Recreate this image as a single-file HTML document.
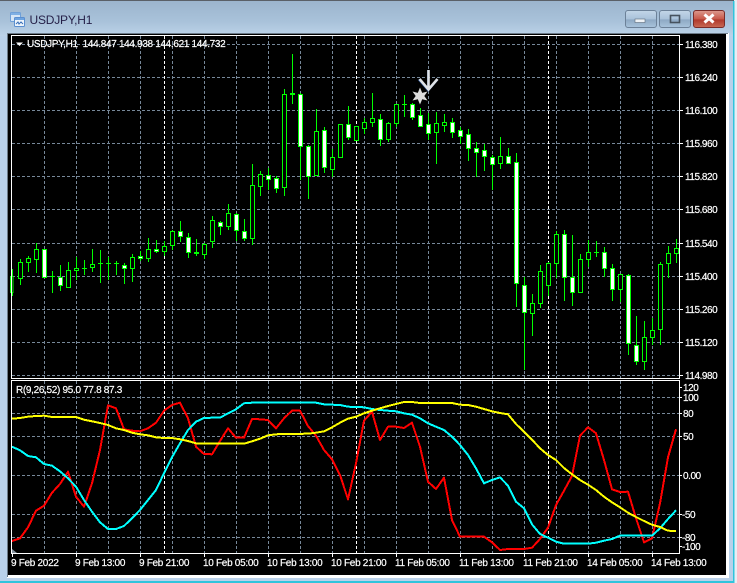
<!DOCTYPE html>
<html><head><meta charset="utf-8"><style>
html,body{margin:0;padding:0;background:#2fc4dc}
body{width:737px;height:583px;overflow:hidden;position:relative}
svg{position:absolute;left:0;top:0}
text{font-family:"Liberation Sans",sans-serif;font-size:10px;fill:#fff;stroke:#fff;stroke-width:.2px}
.p text{letter-spacing:-.45px}
.d text{letter-spacing:-.3px}
</style></head><body>
<svg width="737" height="583" viewBox="0 0 737 583">
<defs>
<linearGradient id="t" x1="0" y1="0" x2="0" y2="1"><stop offset="0" stop-color="#9bb4cd"/><stop offset=".6" stop-color="#a9c2da"/><stop offset="1" stop-color="#bcd3e9"/></linearGradient>
<linearGradient id="b" x1="0" y1="0" x2="0" y2="1"><stop offset="0" stop-color="#c3d6e8"/><stop offset=".5" stop-color="#a9c2da"/><stop offset=".55" stop-color="#8ea9c4"/><stop offset="1" stop-color="#a9c4dc"/></linearGradient>
<linearGradient id="r" x1="0" y1="0" x2="0" y2="1"><stop offset="0" stop-color="#dc9a8e"/><stop offset=".5" stop-color="#c8594a"/><stop offset=".55" stop-color="#b03a2c"/><stop offset="1" stop-color="#c96a55"/></linearGradient>
</defs>
<!-- window frame -->
<rect x="0" y="0" width="734" height="582" fill="#b9d1ea"/>
<rect x="0" y="0" width="734" height="36" fill="url(#t)"/>
<rect x="0" y="0" width="734" height="1" fill="#5a6068"/>
<rect x="734" y="0" width="3" height="583" fill="#e8eef4"/>
<rect x="733" y="1" width="1.5" height="582" fill="#2fc4dc"/>
<rect x="0" y="581" width="734" height="2" fill="#2fc4dc"/>
<rect x="7" y="33" width="722" height="545" fill="#fff"/>
<rect x="7" y="33" width="721" height="1" fill="#6b7a88"/>
<rect x="7" y="33" width="1" height="544" fill="#6b7a88"/>
<rect x="8" y="34" width="718" height="541" fill="#000"/>
<!-- title icon -->
<rect x="10.5" y="12.5" width="10" height="9" rx="1" fill="#d6e6f6" stroke="#6fa0d8"/>
<rect x="14.5" y="17.5" width="10" height="9" rx="1" fill="#eef5fc" stroke="#5b8fd0"/>
<rect x="11" y="13" width="9" height="2" fill="#7fb0e4"/>
<rect x="15" y="18" width="9" height="2" fill="#6ea4e0"/>
<path d="M16 24l2-2 1 2 2-2 2 2" fill="none" stroke="#3a70b8"/>
<text x="29.5" y="24" style="font-size:12px;fill:#241f47;stroke:none;letter-spacing:-.2px">USDJPY,H1</text>
<!-- buttons -->
<rect x="625.5" y="10.5" width="31" height="17" rx="2.5" fill="url(#b)" stroke="#6c8198"/>
<rect x="635" y="19" width="10" height="3.5" fill="#eef2f6" stroke="#5d6b7a" stroke-width=".6"/>
<rect x="659.5" y="10.5" width="31" height="17" rx="2.5" fill="url(#b)" stroke="#6c8198"/>
<rect x="670.5" y="15.5" width="9" height="7" fill="none" stroke="#46525e" stroke-width="1.6"/>
<rect x="693.5" y="10.5" width="31" height="17" rx="2.5" fill="url(#r)" stroke="#7a2c28"/>
<path d="M704.5 14.5l9 8M713.5 14.5l-9 8" stroke="#fff" stroke-width="3" fill="none"/>
<!-- grid -->
<g fill="none" stroke="#778899" stroke-width="1" stroke-dasharray="3 2" shape-rendering="crispEdges">
<path d="M12 44.5H679M12 77.5H679M12 110.5H679M12 143.5H679M12 176.5H679M12 209.5H679M12 243.5H679M12 276.5H679M12 309.5H679M12 342.5H679M12 375.5H679"/>
<path d="M12 397.5H679M12 413.5H679M12 436.5H679M12 475.5H679M12 514.5H679M12 537.5H679"/>
<path d="M44.5 36V378M76.5 36V378M108.5 36V378M140.5 36V378M172.5 36V378M204.5 36V378M236.5 36V378M268.5 36V378M300.5 36V378M332.5 36V378M364.5 36V378M396.5 36V378M428.5 36V378M460.5 36V378M492.5 36V378M524.5 36V378M556.5 36V378M588.5 36V378M620.5 36V378M652.5 36V378"/>
<path d="M44.5 381V553M76.5 381V553M108.5 381V553M140.5 381V553M172.5 381V553M204.5 381V553M236.5 381V553M268.5 381V553M300.5 381V553M332.5 381V553M364.5 381V553M396.5 381V553M428.5 381V553M460.5 381V553M492.5 381V553M524.5 381V553M556.5 381V553M588.5 381V553M620.5 381V553M652.5 381V553"/>
</g>
<g fill="none" stroke="#fff" stroke-width="1" stroke-dasharray="3 2" shape-rendering="crispEdges">
<path d="M164.5 36V378M356.5 36V378M548.5 36V378M164.5 381V553M356.5 381V553M548.5 381V553"/>
</g>
<!-- wicks and dojis -->
<path shape-rendering="crispEdges" fill="none" stroke="#0f0" d="M12.5 269V296M20.5 259V285M28.5 256V272M36.5 243V273M44.5 249V278M52.5 271V293M60.5 265V291M68.5 262V288M76.5 257V280M84.5 260V275M92.5 249V272M100.5 250V283M108.5 257V280M116.5 261V275M124.5 263V284M132.5 254V282M140.5 251V261M148.5 238V262M156.5 240V253M164.5 241V256M172.5 230V250M180.5 221V242M188.5 233V258M196.5 239V256M204.5 243V259M212.5 216V248M220.5 221V235M228.5 204V230M236.5 213V241M244.5 219V241M252.5 164V245M260.5 171V196M268.5 168V190M276.5 176V193M284.5 89V196M292.5 54V104M300.5 93V180M308.5 145V199M316.5 109V175M324.5 127V173M332.5 149V177M340.5 124V158M348.5 106V140M356.5 126V141M364.5 118V134M372.5 93V127M380.5 114V146M388.5 122V142M396.5 104V127M404.5 95V117M412.5 103V120M420.5 108V127M428.5 113V140M436.5 112V164M444.5 114V132M452.5 118V138M460.5 127V144M468.5 129V161M476.5 142V177M484.5 144V171M492.5 155V190M500.5 137V169M508.5 148V164M516.5 153V307M524.5 277V370M532.5 294V336M540.5 265V308M548.5 262V296M556.5 231V278M564.5 230V301M572.5 235V306M580.5 254V293M588.5 240V267M596.5 241V257M604.5 247V277M612.5 264V301M620.5 274V302M628.5 274V355M636.5 316V365M644.5 321V370M652.5 318V345M660.5 262V345M668.5 246V278M676.5 239V263
M50 276.5h5M82 268.5h5M98 263.5h5M106 263.5h5M114 263.5h5M194 252.5h5M194 253.5h5M290 93.5h5M290 94.5h5M402 104.5h5M594 252.5h5"/>
<!-- hollow bodies -->
<path shape-rendering="crispEdges" fill="#000" stroke="#0f0" d="M10.5 276.5h2.5v16h-2.5zM18.5 262.5h4v16h-4zM26.5 258.5h4v4h-4zM34.5 249.5h4v10h-4zM66.5 270.5h4v17h-4zM74.5 268.5h4v2h-4zM90.5 264.5h4v3h-4zM130.5 257.5h4v11h-4zM146.5 249.5h4v9h-4zM162.5 246.5h4v5h-4zM170.5 231.5h4v14h-4zM202.5 244.5h4v10h-4zM210.5 220.5h4v21h-4zM226.5 213.5h4v13h-4zM250.5 185.5h4v53h-4zM258.5 174.5h4v12h-4zM282.5 94.5h4v93h-4zM314.5 131.5h4v44h-4zM330.5 157.5h4v12h-4zM338.5 124.5h4v33h-4zM354.5 126.5h4v14h-4zM362.5 122.5h4v6h-4zM370.5 118.5h4v4h-4zM386.5 123.5h4v16h-4zM394.5 104.5h4v19h-4zM434.5 123.5h4v9h-4zM442.5 122.5h4v3h-4zM498.5 156.5h4v7h-4zM530.5 303.5h4v10h-4zM538.5 271.5h4v32h-4zM546.5 263.5h4v22h-4zM554.5 234.5h4v29h-4zM578.5 259.5h4v33h-4zM586.5 252.5h4v7h-4zM618.5 274.5h4v15h-4zM642.5 337.5h4v24h-4zM650.5 330.5h4v7h-4zM658.5 264.5h4v65h-4zM666.5 253.5h4v10h-4zM674.5 248.5h4v5h-4z"/>
<!-- filled bodies -->
<path shape-rendering="crispEdges" fill="#fff" stroke="#0f0" d="M42.5 249.5h4v28h-4zM58.5 277.5h4v8h-4zM122.5 265.5h4v3h-4zM138.5 256.5h4v2h-4zM154.5 249.5h4v2h-4zM178.5 231.5h4v5h-4zM186.5 237.5h4v15h-4zM218.5 222.5h4v4h-4zM234.5 214.5h4v16h-4zM242.5 231.5h4v7h-4zM266.5 175.5h4v4h-4zM274.5 178.5h4v10h-4zM298.5 94.5h4v52h-4zM306.5 146.5h4v30h-4zM322.5 130.5h4v37h-4zM346.5 124.5h4v13h-4zM378.5 119.5h4v20h-4zM410.5 104.5h4v13h-4zM418.5 115.5h4v11h-4zM426.5 124.5h4v9h-4zM450.5 122.5h4v10h-4zM458.5 130.5h4v6h-4zM466.5 134.5h4v14h-4zM474.5 148.5h4v4h-4zM482.5 150.5h4v6h-4zM490.5 157.5h4v7h-4zM506.5 156.5h4v7h-4zM514.5 162.5h4v121h-4zM522.5 285.5h4v27h-4zM562.5 234.5h4v43h-4zM570.5 277.5h4v15h-4zM602.5 252.5h4v16h-4zM610.5 268.5h4v21h-4zM626.5 275.5h4v68h-4zM634.5 345.5h4v16h-4z"/>
<!-- markers -->
<path d="M420 87.5l2.2 5.4 5.3-1.400-3.200 4.500 3.200 4.500-5.300-1.200-2.200 5.200-2.200-5.200-5.300 1.200 3.200-4.500-3.200-4.500 5.300 1.400z" fill="#dcdcdc"/>
<path d="M429.500 70V89M420 79.500l9.500 11 9.500-11" fill="none" stroke="#1c3f78" stroke-width="2" transform="translate(-1.400 0)"/>
<path d="M428.500 70V89M419.500 79l9 10.500 9-10.500" fill="none" stroke="#dfe3e8" stroke-width="2.600"/>
<!-- sub window lines -->
<g fill="none" stroke-width="2" stroke-linejoin="round" shape-rendering="crispEdges">
<polyline stroke="#f00" points="12,541 20,538.300 28,527.300 36,510.700 44,505.700 52,492.700 60,484 68,471.700 76,496.700 84,506.700 92,483.300 100,450 108,405.300 116,408.300 124,429.300 132,430.700 140,431.300 148,428.300 156,422.700 164,410.700 172,405 180,402.700 188,418.300 196,446.700 204,454 212,454.300 220,441 228,428.300 236,437.700 244,437.700 252,419 260,419.300 268,420 276,428.300 284,418.300 292,410.700 300,410.700 308,426 316,435.700 324,450 332,459.300 340,475 348,499.300 356,463.300 364,420.700 372,411.700 380,440 388,426.700 396,426.700 404,428 412,422.700 420,446.700 428,481.700 436,489 444,477.700 452,520 460,536.700 468,536.700 476,536.700 484,536.700 492,542.300 500,550 508,549 516,549 524,549 532,547.700 540,539 548,527.700 556,505 564,490.700 572,476 580,435.700 588,427.300 596,433.300 604,460 612,489.300 620,492 628,491.700 636,518.300 644,542.300 652,538.300 660,503.300 668,457.300 676,429.300"/>
<polyline stroke="#0ff" points="12,446.700 20,450.300 28,456 36,457.300 44,464 52,465.700 60,471.300 68,478.300 76,486.700 84,500 92,511.700 100,522.300 108,529 116,529 124,526 132,518.300 140,510 148,500 156,490 164,473.300 172,457.300 180,443.300 188,430 196,421.700 204,418 212,417.700 220,417.700 228,413.300 236,409.300 244,403.300 252,402.700 316,402.700 324,404.300 332,404.700 340,405 348,406.700 356,407 364,407.300 372,409 380,410 388,410.700 396,411.300 404,413.300 412,414.700 420,418.300 428,423.300 436,426.700 444,430 452,436.700 460,445 468,455 476,468.300 484,483.300 492,480 500,477.300 508,485.700 516,501.700 524,508.300 532,524.300 540,534 548,537.700 556,541.700 564,543.700 588,543.700 596,542.700 604,540.700 612,539 620,535.700 652,535.700 660,528.300 668,519 676,510.300"/>
<polyline stroke="#ff0" points="12,418.700 20,418 28,416.700 36,416 44,415.700 52,417 76,417 84,419.700 92,421.300 100,423 108,425 116,428.300 124,430 132,432.700 140,434.300 148,435.300 156,437.300 164,438 172,438 180,439.300 188,441 196,443.300 204,443.700 244,443.700 252,441.300 260,438.700 268,435.300 276,434.300 284,434 308,433.700 316,432.700 324,431.300 332,427.300 340,422.700 348,418.700 356,416.700 364,413.300 372,410.700 380,408.300 388,406 396,404 404,402 412,402 420,403 452,403 460,404.700 468,405 476,406.700 484,409 492,411.300 500,413 508,414.300 516,424 524,431.700 532,439.700 540,448.300 548,455 556,460 564,468 572,474.300 580,480 588,484.700 596,490 604,496.700 612,502.300 620,507.300 628,512.700 636,517 644,521 652,524.700 660,527 668,530.700 676,531"/>
</g>
<!-- chart borders -->
<g shape-rendering="crispEdges" fill="none" stroke="#fff">
<path d="M11.500 35.500H679.500V378.500H11.500z"/>
<path d="M11.500 380.500H679.500V553.500H11.500z"/>
<path d="M679 44.500h4M679 77.500h4M679 110.500h4M679 143.500h4M679 176.500h4M679 209.500h4M679 243.500h4M679 276.500h4M679 309.500h4M679 342.500h4M679 375.500h4"/>
<path d="M679 387.500h3M679 397.500h3M679 413.500h3M679 436.500h3M679 475.500h3M679 514.500h3M679 537.500h3M679 546.500h3"/>
<path d="M76.500 553v4M140.500 553v4M204.500 553v4M268.500 553v4M332.500 553v4M396.500 553v4M460.500 553v4M524.500 553v4M588.500 553v4M652.500 553v4M12.500 553v4"/>
</g>
<path d="M12 549l5 4h-5z" fill="#8a96a2"/>
<path d="M16 42.500h7l-3.500 3.500z" fill="#fff"/>
<!-- legends -->
<text x="27" y="47" style="letter-spacing:-.33px">USDJPY,H1&#160;&#160;144.847 144.938 144.621 144.732</text>
<text x="16" y="393" style="letter-spacing:-.32px">R(9,26,52) 95.0 77.8 87.3</text>
<!-- price axis -->
<g class="p">
<text x="685" y="48">116.380</text><text x="685" y="81">116.240</text><text x="685" y="114">116.100</text><text x="685" y="147">115.960</text><text x="685" y="180">115.820</text><text x="685" y="213">115.680</text><text x="685" y="247">115.540</text><text x="685" y="280">115.400</text><text x="685" y="313">115.260</text><text x="685" y="346">115.120</text><text x="685" y="379">114.980</text>
<text x="683" y="391">120</text><text x="683" y="401">100</text><text x="683" y="417">80</text><text x="683" y="440">50</text><text x="683" y="479">0.00</text><text x="682" y="518">-50</text><text x="682" y="541">-80</text><text x="682" y="550">-100</text>
</g>
<!-- time axis -->
<g class="d">
<text x="11" y="566">9 Feb 2022</text><text x="75" y="566">9 Feb 13:00</text><text x="139" y="566">9 Feb 21:00</text><text x="203" y="566">10 Feb 05:00</text><text x="267" y="566">10 Feb 13:00</text><text x="331" y="566">10 Feb 21:00</text><text x="395" y="566">11 Feb 05:00</text><text x="459" y="566">11 Feb 13:00</text><text x="523" y="566">11 Feb 21:00</text><text x="587" y="566">14 Feb 05:00</text><text x="651" y="566">14 Feb 13:00</text>
</g>
</svg>
</body></html>
